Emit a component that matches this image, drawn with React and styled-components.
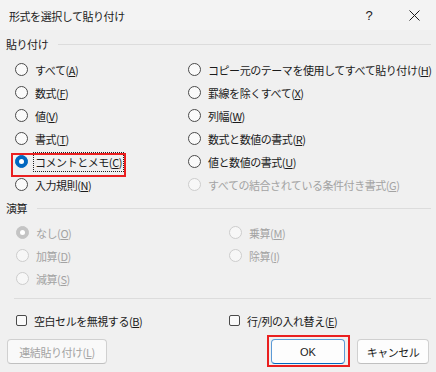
import React from 'react';
import styled, { createGlobalStyle } from 'styled-components';

const GlobalStyle = createGlobalStyle`
  html, body {
    margin: 0;
    padding: 0;
    background: #f0f0f0;
  }
  body {
    font-family: "Noto Sans CJK JP", "Noto Sans", sans-serif;
    font-size: 11px;
    letter-spacing: -0.45px;
    color: #1b1b1b;
  }
  u {
    text-underline-offset: 1px;
  }
`;

const Window = styled.div`
  width: 436px;
  height: 372px;
  background: #f0f0f0;
  display: flex;
  flex-direction: column;
  overflow: hidden;
`;

const TitleBar = styled.div`
  height: 30px;
  background: #f3f3f3;
  display: flex;
  align-items: center;
  padding-left: 9px;
  flex-shrink: 0;
`;

const Title = styled.div`
  flex: 1;
  font-size: 11px;
  color: #1b1b1b;
  padding-top: 1px;
`;

const TitleButton = styled.div`
  width: ${p => p.$w}px;
  height: 30px;
  display: flex;
  align-items: center;
  justify-content: center;
  font-family: "Liberation Sans", sans-serif;
  font-size: 13px;
  color: #1b1b1b;
`;

const Body = styled.div`
  padding: 0 5px 0 6px;
  display: flex;
  flex-direction: column;
`;

const GroupHeader = styled.div`
  display: flex;
  align-items: center;
  height: 16px;
  margin-top: ${p => p.$top}px;
  font-size: 11px;
  gap: 10px;
  &::after {
    content: '';
    flex: 1;
    height: 1px;
    background: #dcdcdc;
  }
`;

const OptionGrid = styled.div`
  display: grid;
  grid-template-columns: ${p => p.$col}px 1fr;
  grid-auto-rows: 23px;
  padding-left: ${p => p.$pad}px;
  margin-top: ${p => p.$top}px;
`;

const Option = styled.div`
  position: relative;
  display: flex;
  align-items: center;
  gap: 7px;
  white-space: nowrap;
  color: ${p => (p.$disabled ? '#a3a3a3' : '#1b1b1b')};
  ${p =>
    p.$marked &&
    `
    justify-self: start;
    &::after {
      content: '';
      position: absolute;
      left: -4px;
      right: -3px;
      top: 3px;
      height: 20px;
      border: 2px solid #ea1f1f;
      pointer-events: none;
    }
  `}
`;

const Radio = styled.span`
  width: 13px;
  height: 13px;
  box-sizing: border-box;
  border-radius: 50%;
  flex-shrink: 0;
  display: flex;
  align-items: center;
  justify-content: center;
  border: 1px solid ${p => (p.$checked ? (p.$disabled ? '#c4c4c4' : '#0067c0') : p.$disabled ? '#cdcdcd' : '#4a4a4a')};
  background: ${p => (p.$checked ? (p.$disabled ? '#c4c4c4' : '#0067c0') : p.$disabled ? '#f7f7f7' : '#fafafa')};
  &::after {
    content: '';
    display: ${p => (p.$checked ? 'block' : 'none')};
    width: 5px;
    height: 5px;
    border-radius: 50%;
    background: #ffffff;
  }
`;

const Label = styled.span`
  padding: 0 1px;
  margin-left: -1px;
  line-height: 18px;
  outline: ${p => (p.$focus ? '1px dotted #222' : 'none')};
`;

const Separator = styled.div`
  height: 1px;
  background: #dcdcdc;
  margin: 8px 0 0 8px;
`;

const Checkbox = styled.span`
  width: 11px;
  height: 11px;
  box-sizing: border-box;
  border: 1px solid #4a4a4a;
  border-radius: 2px;
  background: #fafafa;
  flex-shrink: 0;
`;

const Footer = styled.div`
  display: flex;
  align-items: center;
  padding: 0 7px;
  margin-top: 7px;
`;

const ButtonGroup = styled.div`
  margin-left: auto;
  display: flex;
  gap: 12px;
`;

const Button = styled.div`
  position: relative;
  width: ${p => p.$w}px;
  height: 25px;
  box-sizing: border-box;
  border-radius: 4px;
  display: flex;
  align-items: center;
  justify-content: center;
  font-size: 11px;
  background: ${p => (p.$disabled ? '#f9f9f9' : '#fdfdfd')};
  color: ${p => (p.$disabled ? '#a3a3a3' : '#1b1b1b')};
  border: 1px solid ${p => (p.$primary ? '#5b9ad6' : '#d0d0d0')};
  border-bottom-color: ${p => (p.$primary ? '#0067c0' : '#c0c0c0')};
  font-family: ${p => (p.$latin ? '"Liberation Sans", sans-serif' : 'inherit')};
  letter-spacing: ${p => (p.$latin ? '0' : 'inherit')};
  ${p =>
    p.$marked &&
    `
    &::after {
      content: '';
      position: absolute;
      left: -5px;
      top: -5px;
      right: -6px;
      bottom: -4px;
      border: 2px solid #ea1f1f;
      pointer-events: none;
    }
  `}
`;

const pasteOptions = [
  ['すべて', 'A'],
  ['コピー元のテーマを使用してすべて貼り付け', 'H'],
  ['数式', 'F'],
  ['罫線を除くすべて', 'X'],
  ['値', 'V'],
  ['列幅', 'W'],
  ['書式', 'T'],
  ['数式と数値の書式', 'R'],
  ['コメントとメモ', 'C', { checked: true, focus: true, marked: true }],
  ['値と数値の書式', 'U'],
  ['入力規則', 'N'],
  ['すべての結合されている条件付き書式', 'G', { disabled: true }],
];

const opOptions = [
  ['なし', 'O', { checked: true, disabled: true }],
  ['乗算', 'M', { disabled: true }],
  ['加算', 'D', { disabled: true }],
  ['除算', 'I', { disabled: true }],
  ['減算', 'S', { disabled: true }],
];

const RadioOption = ({ text, mnemonic, opts = {} }) => (
  <Option $disabled={opts.disabled} $marked={opts.marked}>
    <Radio $checked={opts.checked} $disabled={opts.disabled} />
    <Label $focus={opts.focus}>
      {text}(<u>{mnemonic}</u>)
    </Label>
  </Option>
);

const CloseIcon = () => (
  <svg width="11" height="11" viewBox="0 0 11 11">
    <path d="M0.5 0.5 L10.5 10.5 M10.5 0.5 L0.5 10.5" stroke="#1b1b1b" strokeWidth="1" />
  </svg>
);

export default function App() {
  return (
    <Window>
      <GlobalStyle />
      <TitleBar>
        <Title>形式を選択して貼り付け</Title>
        <TitleButton $w={46}>?</TitleButton>
        <TitleButton $w={44}>
          <CloseIcon />
        </TitleButton>
      </TitleBar>
      <Body>
        <GroupHeader $top={6}>貼り付け</GroupHeader>
        <OptionGrid $col={173} $pad={9} $top={6}>
          {pasteOptions.map(([t, m, o]) => (
            <RadioOption key={t} text={t} mnemonic={m} opts={o} />
          ))}
        </OptionGrid>
        <GroupHeader $top={4}>演算</GroupHeader>
        <OptionGrid $col={213} $pad={10} $top={5}>
          {opOptions.map(([t, m, o]) => (
            <RadioOption key={t} text={t} mnemonic={m} opts={o} />
          ))}
        </OptionGrid>
        <Separator />
        <OptionGrid $col={213} $pad={10} $top={10}>
          <Option>
            <Checkbox />
            <Label>
              空白セルを無視する(<u>B</u>)
            </Label>
          </Option>
          <Option>
            <Checkbox />
            <Label>
              行/列の入れ替え(<u>E</u>)
            </Label>
          </Option>
        </OptionGrid>
      </Body>
      <Footer>
        <Button $w={100} $disabled>
          連結貼り付け(<u>L</u>)
        </Button>
        <ButtonGroup>
          <Button $w={74} $primary $marked $latin>
            OK
          </Button>
          <Button $w={72}>キャンセル</Button>
        </ButtonGroup>
      </Footer>
    </Window>
  );
}
